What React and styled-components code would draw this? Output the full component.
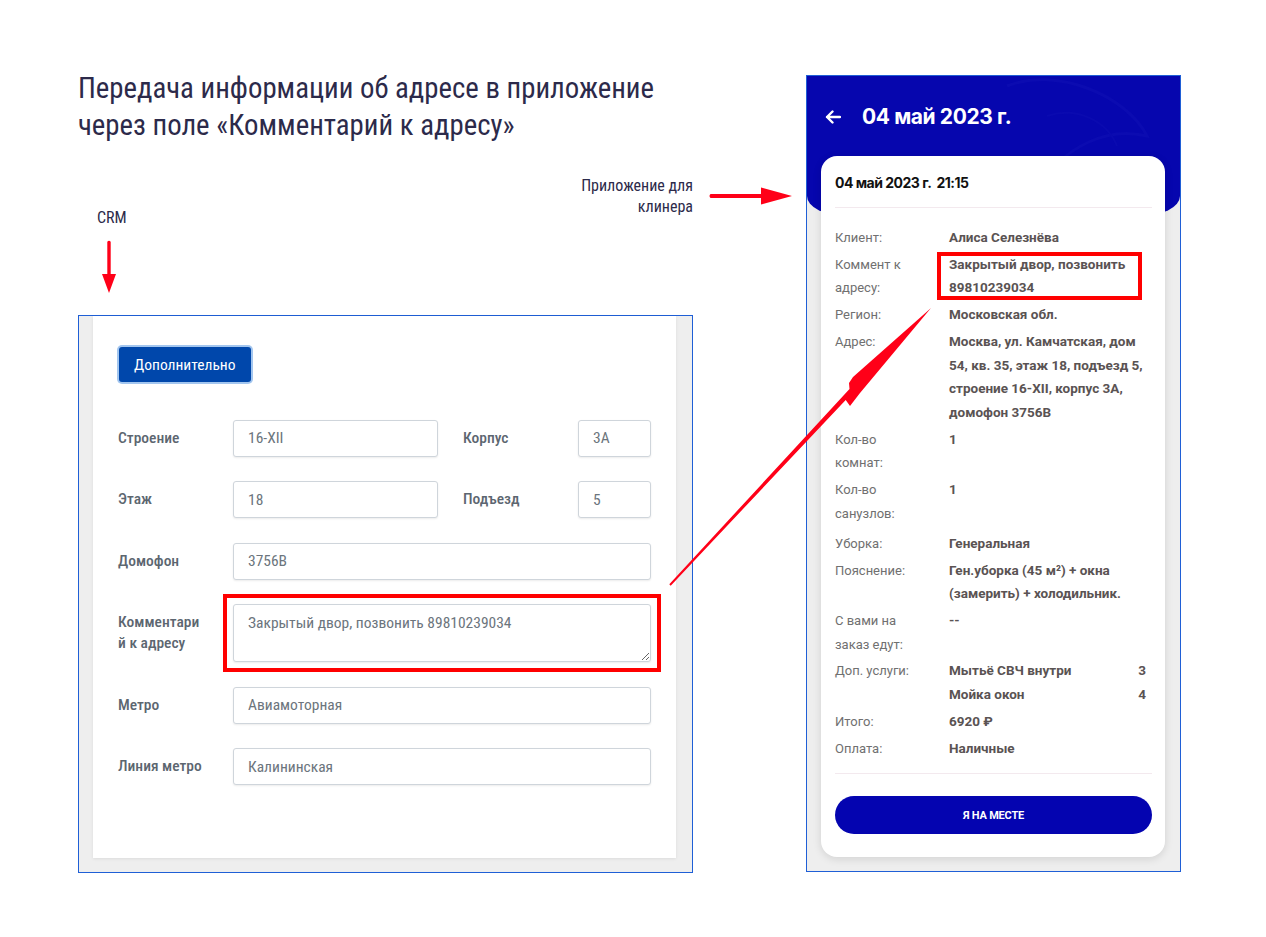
import React from 'react';
import styled, { createGlobalStyle, css } from 'styled-components';

const GlobalStyle = createGlobalStyle`
  body {
    margin: 0;
    background: #ffffff;
    font-family: Roboto, "Liberation Sans", sans-serif;
  }
`;

const condensed = `"Roboto Condensed", "Liberation Sans Narrow", "DejaVu Sans Condensed", Roboto, sans-serif`;

const Page = styled.div`
  position: relative;
  width: 1266px;
  height: 937px;
  box-sizing: border-box;
  padding: 70px 0 0 78px;
  display: flex;
  align-items: flex-start;
  overflow: hidden;
`;

const LeftCol = styled.div`
  width: 728px;
  display: flex;
  flex-direction: column;
`;

const Title = styled.h1`
  margin: 0;
  font-family: ${condensed};
  font-stretch: condensed;
  font-weight: 400;
  font-size: 28.8px;
  line-height: 37px;
  color: #2c2a4a;
`;

const NoteRow = styled.div`
  display: flex;
  justify-content: space-between;
  align-items: flex-start;
`;

const CrmNote = styled.div`
  display: flex;
  flex-direction: column;
  align-items: flex-start;
  padding: 64px 0 0 19px;
`;

const NoteText = styled.div`
  font-family: ${condensed};
  font-stretch: condensed;
  font-size: 16px;
  line-height: ${(p) => (p.$tight ? '21px' : '20px')};
  color: #2c2a4a;
  text-align: ${(p) => (p.$right ? 'right' : 'left')};
`;

const DownArrow = styled.svg`
  display: block;
  margin: 12px 0 22px 5px;
`;

const AppNote = styled.div`
  display: flex;
  align-items: center;
  gap: 16px;
  margin-top: 31px;
  padding-right: 14px;
`;

const CrmFrame = styled.div`
  width: 615px;
  height: 558px;
  box-sizing: border-box;
  border: 1px solid #1f5fd6;
  background: #eeeeee;
  padding: 0 16px 14px 14px;
`;

const CrmCard = styled.div`
  height: 100%;
  box-sizing: border-box;
  background: #ffffff;
  box-shadow: 0 1px 3px rgba(0, 0, 0, 0.08);
  padding: 31px 25px 0 25px;
`;

const MoreButton = styled.button`
  margin-left: 1px;
  height: 35px;
  padding: 0 15px;
  border: none;
  border-radius: 3px;
  background: #0047ab;
  color: #ffffff;
  font-family: ${condensed};
  font-stretch: condensed;
  font-size: 15.5px;
  box-shadow: 0 0 0 2px #a3c6ef;
`;

const Form = styled.div`
  margin-top: 37.5px;
  display: flex;
  flex-direction: column;
  gap: 24.5px;
`;

const Row = styled.div`
  display: flex;
  gap: 25px;
`;

const Field = styled.div`
  display: flex;
  align-items: center;
  min-width: 0;
  ${(p) => (p.$width ? `width: ${p.$width}px; flex-shrink: 0;` : 'flex: 1;')}
`;

const Label = styled.div`
  width: 115px;
  flex-shrink: 0;
  box-sizing: border-box;
  padding-right: 27px;
  font-family: ${condensed};
  font-stretch: condensed;
  font-weight: 500;
  font-size: 15.5px;
  line-height: 21px;
  color: #5c6670;
  overflow-wrap: anywhere;
`;

const fieldBase = css`
  flex: 1;
  width: 0;
  min-width: 0;
  box-sizing: border-box;
  border: 1px solid #cfd5db;
  border-radius: 3px;
  background: #ffffff;
  box-shadow: 0 1px 2px rgba(0, 0, 0, 0.08);
  font-family: ${condensed};
  font-stretch: condensed;
  font-size: 15.5px;
  color: #6c757d;
  padding: 0 14px;
  outline: none;
`;

const Input = styled.input`
  ${fieldBase};
  height: 37px;
`;

const Highlight = styled.div`
  flex: 1;
  min-width: 0;
  display: flex;
  outline: 4px solid #ff0000;
  outline-offset: 6px;
`;

const TextArea = styled.textarea`
  ${fieldBase};
  height: 58px;
  padding: 8px 14px;
  line-height: 20px;
`;

const AppFrame = styled.div`
  margin-top: 5px;
  width: 375px;
  height: 797px;
  box-sizing: border-box;
  border: 1px solid #1f5fd6;
  background: #eeeeee;
  display: flex;
  flex-direction: column;
  overflow: hidden;
`;

const AppHeader = styled.div`
  position: relative;
  height: 140px;
  flex-shrink: 0;
  box-sizing: border-box;
  background: #0606ae;
  border-radius: 0 0 40px 40px / 0 0 20px 20px;
  padding: 27px 0 0 18px;
  overflow: hidden;

  & > svg {
    position: absolute;
    left: 0;
    top: 0;
  }
`;

const HeaderRow = styled.div`
  position: relative;
  display: flex;
  align-items: center;
  gap: 21px;
`;

const HeaderTitle = styled.div`
  font-family: Inter, Roboto, sans-serif;
  font-weight: 700;
  font-size: 21px;
  line-height: 28px;
  letter-spacing: -0.4px;
  color: #ffffff;
`;

const OrderCard = styled.div`
  position: relative;
  z-index: 1;
  flex: 1;
  margin: -60px 15px 14px 14px;
  background: #ffffff;
  border-radius: 16px;
  box-shadow: 0 2px 8px rgba(0, 0, 0, 0.12);
  padding: 0 13px 0 14px;
  display: flex;
  flex-direction: column;
`;

const CardHead = styled.div`
  padding: 17px 0 14px;
  border-bottom: 1px solid #f3e9ee;
  font-family: Inter, Roboto, sans-serif;
  font-weight: 700;
  font-size: 14px;
  line-height: 20px;
  letter-spacing: -0.5px;
  color: #111111;
  white-space: pre;
`;

const Details = styled.div`
  padding: 18px 0 13px;
  display: flex;
  flex-direction: column;
  gap: 3.45px;
  border-bottom: 1px solid #f3e9ee;
`;

const DRow = styled.div`
  display: grid;
  grid-template-columns: 114px 1fr;
  line-height: 23.5px;
  ${(p) => p.$spaced && 'margin-top: 3px;'}
`;

const DLabel = styled.div`
  color: #707070;
  font-size: 13px;
  padding-right: 28px;
`;

const DValue = styled.div`
  position: relative;
  color: #5a5353;
  font-weight: 700;
  font-size: 13.5px;

  ${(p) =>
    p.$marked &&
    css`
      &::after {
        content: '';
        position: absolute;
        left: -12px;
        top: -1px;
        right: 10px;
        bottom: 0;
        border: 4px solid #ff0000;
      }
    `}
`;

const Service = styled.div`
  display: flex;
  justify-content: space-between;
  padding-right: 6px;
`;

const CardFoot = styled.div`
  padding-top: 22px;
`;

const PlaceButton = styled.button`
  width: 100%;
  height: 38px;
  border: none;
  border-radius: 19px;
  background: #0404b0;
  color: #ffffff;
  font-family: Roboto, sans-serif;
  font-weight: 700;
  font-size: 11px;
  letter-spacing: -0.2px;
`;

const Overlay = styled.svg`
  position: absolute;
  left: 0;
  top: 0;
  pointer-events: none;
  z-index: 5;
`;

const details = [
  ['Клиент:', 'Алиса Селезнёва'],
  ['Коммент к адресу:', 'Закрытый двор, позвонить 89810239034', true],
  ['Регион:', 'Московская обл.'],
  ['Адрес:', 'Москва, ул. Камчатская, дом 54, кв. 35, этаж 18, подъезд 5, строение 16-XII, корпус 3А, домофон 3756В'],
  ['Кол-во комнат:', '1'],
  ['Кол-во санузлов:', '1'],
];

const details2 = [
  ['Уборка:', 'Генеральная'],
  ['Пояснение:', 'Ген.уборка (45 м²) + окна (замерить) + холодильник.'],
  ['С вами на заказ едут:', '--'],
];

const App = () => {
  return (
    <>
      <GlobalStyle />
      <Page>
        <LeftCol>
          <Title>
            Передача информации об адресе в приложение
            <br />
            через поле «Комментарий к адресу»
          </Title>
          <NoteRow>
            <CrmNote>
              <NoteText>CRM</NoteText>
              <DownArrow width="14" height="53" viewBox="0 0 14 53">
                <path d="M5.3 1.8 Q7 -0.5 8.7 1.8 L8.7 34 L14 34 L7 53 L0 34 L5.3 34 Z" fill="#ff0018" />
              </DownArrow>
            </CrmNote>
            <AppNote>
              <NoteText $right $tight>
                Приложение для
                <br />
                клинера
              </NoteText>
              <svg width="83" height="18" viewBox="0 0 83 18">
                <path d="M1.5 7 L52 7 L52 0.5 L83 9 L52 17.5 L52 11 L1.5 11 Q-0.5 9 1.5 7 Z" fill="#ff0018" />
              </svg>
            </AppNote>
          </NoteRow>
          <CrmFrame>
            <CrmCard>
              <MoreButton>Дополнительно</MoreButton>
              <Form>
                <Row>
                  <Field $width={320}>
                    <Label>Строение</Label>
                    <Input readOnly value="16-XII" />
                  </Field>
                  <Field>
                    <Label>Корпус</Label>
                    <Input readOnly value="3А" />
                  </Field>
                </Row>
                <Row>
                  <Field $width={320}>
                    <Label>Этаж</Label>
                    <Input readOnly value="18" />
                  </Field>
                  <Field>
                    <Label>Подъезд</Label>
                    <Input readOnly value="5" />
                  </Field>
                </Row>
                <Row>
                  <Field>
                    <Label>Домофон</Label>
                    <Input readOnly value="3756В" />
                  </Field>
                </Row>
                <Row>
                  <Field>
                    <Label>Комментарий к адресу</Label>
                    <Highlight>
                      <TextArea readOnly value="Закрытый двор, позвонить 89810239034" />
                    </Highlight>
                  </Field>
                </Row>
                <Row>
                  <Field>
                    <Label>Метро</Label>
                    <Input readOnly value="Авиамоторная" />
                  </Field>
                </Row>
                <Row>
                  <Field>
                    <Label>Линия метро</Label>
                    <Input readOnly value="Калининская" />
                  </Field>
                </Row>
              </Form>
            </CrmCard>
          </CrmFrame>
        </LeftCol>

        <AppFrame>
          <AppHeader>
            <svg width="375" height="140" viewBox="0 0 375 140" fill="none">
              <path d="M200 10 C250 -10 320 20 340 60 C300 50 260 70 230 110" stroke="#0b0bb1" strokeWidth="3" />
              <path d="M240 40 C270 30 300 45 310 70" stroke="#0a0ab0" strokeWidth="2" />
            </svg>
            <HeaderRow>
              <svg width="16" height="14" viewBox="0 0 16 14" fill="none">
                <path d="M15 7 H2 M7.5 1.5 L2 7 L7.5 12.5" stroke="#ffffff" strokeWidth="2.4" strokeLinecap="round" strokeLinejoin="round" />
              </svg>
              <HeaderTitle>04 май 2023 г.</HeaderTitle>
            </HeaderRow>
          </AppHeader>
          <OrderCard>
            <CardHead>{'04 май 2023 г.  21:15'}</CardHead>
            <Details>
              {details.map(([label, value, marked]) => (
                <DRow key={label}>
                  <DLabel>{label}</DLabel>
                  <DValue $marked={marked}>{value}</DValue>
                </DRow>
              ))}
              {details2.map(([label, value], i) => (
                <DRow key={label} $spaced={i === 0}>
                  <DLabel>{label}</DLabel>
                  <DValue>{value}</DValue>
                </DRow>
              ))}
              <DRow>
                <DLabel>Доп. услуги:</DLabel>
                <DValue>
                  <Service>
                    <span>Мытьё СВЧ внутри</span>
                    <span>3</span>
                  </Service>
                  <Service>
                    <span>Мойка окон</span>
                    <span>4</span>
                  </Service>
                </DValue>
              </DRow>
              <DRow>
                <DLabel>Итого:</DLabel>
                <DValue>6920 ₽</DValue>
              </DRow>
              <DRow>
                <DLabel>Оплата:</DLabel>
                <DValue>Наличные</DValue>
              </DRow>
            </Details>
            <CardFoot>
              <PlaceButton>Я НА МЕСТЕ</PlaceButton>
            </CardFoot>
          </OrderCard>
        </AppFrame>

        <Overlay width="1266" height="937" viewBox="0 0 1266 937">
          <polygon
            points="931,308 853,377 849,383 849.5,389 669.3,584.3 670.7,585.7 845.7,400 850,406 860,393"
            fill="#ff0018"
          />
        </Overlay>
      </Page>
    </>
  );
};

export default App;
